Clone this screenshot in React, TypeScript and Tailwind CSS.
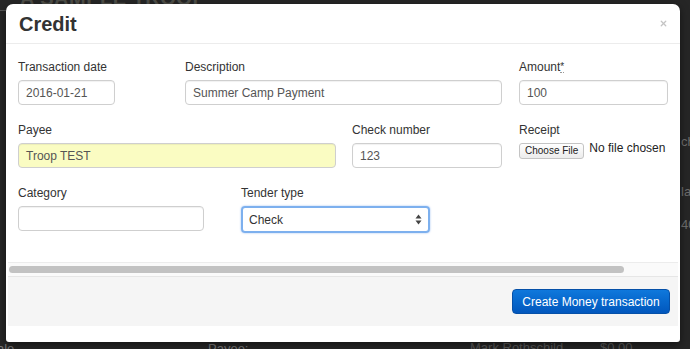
import { X } from 'lucide-react';

const font = "font-['Liberation_Sans',Arial,sans-serif]";

function Label({ children }: { children: React.ReactNode }) {
  return <div className="h-[14px] text-[12px] leading-[14px] text-[#333]">{children}</div>;
}

function TextInput({ value, width, bg = 'bg-white' }: { value: string; width: string; bg?: string }) {
  return (
    <div
      className={`mt-[6px] h-[25px] ${width} ${bg} rounded-[4px] border border-[#cfcfcf] shadow-[inset_0_1px_1px_rgba(0,0,0,0.06)] px-[7px] flex items-center text-[12px] text-[#555]`}
    >
      {value}
    </div>
  );
}

export default function App() {
  return (
    <div className={`relative w-[690px] h-[349px] overflow-hidden bg-[#262626] pt-[4px] pl-[6px] ${font}`}>
      {/* page behind the backdrop */}
      <div className="absolute left-[20px] top-[-17px] text-[20px] font-bold tracking-wide text-[#4e4e48]">A SAMPLE TROOP</div>
      <div className="absolute left-0 top-[10px] w-[6px] h-px bg-[#555]" />
      <div className="absolute left-[-3px] top-[339px] text-[13px] text-[#7a7a7a]">ale</div>
      <div className="absolute left-[208px] top-[339px] text-[13px] text-[#7a7a7a]">Payee:</div>
      <div className="absolute left-[470px] top-[338px] text-[13px] text-[#5a5a5a]">Mark Rothschild</div>
      <div className="absolute left-[600px] top-[338px] text-[13px] text-[#5a5a5a]">$0.00</div>
      <div className="absolute left-[681px] top-[182px] text-[13px] text-[#6e6e6e]">la</div>
      <div className="absolute left-[681px] top-[215px] text-[13px] text-[#6e6e6e]">40</div>
      <div className="absolute left-[681px] top-[132px] text-[13px] text-[#6e6e6e]">ch</div>

      {/* modal */}
      <div className="relative w-[674px] h-[338px] bg-white rounded-t-[7px] rounded-b-[3px] flex flex-col shadow-[0_3px_9px_rgba(0,0,0,0.5)]">
        <div className="h-[40px] shrink-0 border-b border-[#ececec] pl-[13px] pr-[12px] flex items-center justify-between">
          <span className="text-[20px] font-bold text-[#333] leading-none">Credit</span>
          <X className="w-[9px] h-[9px] text-[#c4c4c4]" strokeWidth={3.5} />
        </div>

        <div className="mx-[2px] flex flex-col flex-1">
          {/* form */}
          <div className="h-[218px] pt-[16px] px-[10px] flex flex-col">
            <div className="flex items-start">
              <div className="w-[167px]">
                <Label>Transaction date</Label>
                <TextInput value="2016-01-21" width="w-[97px]" />
              </div>
              <div className="w-[334px]">
                <Label>Description</Label>
                <TextInput value="Summer Camp Payment" width="w-[317px]" />
              </div>
              <div>
                <Label>
                  Amount<span className="text-[10px] align-top border-b border-dotted border-[#999]">*</span>
                </Label>
                <TextInput value="100" width="w-[149px]" />
              </div>
            </div>

            <div className="mt-[18px] flex items-start">
              <div className="w-[334px]">
                <Label>Payee</Label>
                <TextInput value="Troop TEST" width="w-[318px]" bg="bg-[#fafcc2]" />
              </div>
              <div className="w-[167px]">
                <Label>Check number</Label>
                <TextInput value="123" width="w-[150px]" />
              </div>
              <div>
                <Label>Receipt</Label>
                <div className="mt-[4px] flex items-start gap-[5px]">
                  <div className="mt-[2px] h-[16px] px-[5px] rounded-[3px] border border-[#c4c4c4] bg-gradient-to-b from-white to-[#ececec] text-[10px] leading-[14px] text-[#222]">
                    Choose File
                  </div>
                  <span className="text-[12px] leading-[14px] text-[#222]">No file chosen</span>
                </div>
              </div>
            </div>

            <div className="mt-[18px] flex items-start">
              <div className="w-[223px]">
                <Label>Category</Label>
                <TextInput value="" width="w-[186px]" />
              </div>
              <div>
                <Label>Tender type</Label>
                <div className="mt-[6px] h-[27px] w-[189px] rounded-[4px] border-[2px] border-[#7db0ee] shadow-[0_0_2px_rgba(80,140,230,0.6)] pl-[6px] pr-[6px] flex items-center justify-between text-[12px] text-[#333]">
                  <span>Check</span>
                  <svg width="7" height="11" viewBox="0 0 7 11">
                    <path d="M3.5 0.5 L6.5 4.5 H0.5 Z" fill="#444" />
                    <path d="M3.5 10.5 L6.5 6.5 H0.5 Z" fill="#444" />
                  </svg>
                </div>
              </div>
            </div>
          </div>

          {/* horizontal scrollbar */}
          <div className="h-[15px] shrink-0 border-t border-[#ececec] border-b border-b-[#e6e6e6] bg-[#fafafa] flex items-center pl-[1px]">
            <div className="h-[7px] w-[615px] rounded-full bg-[#c2c2c2]" />
          </div>

          {/* footer */}
          <div className="h-[49px] shrink-0 bg-[#f5f5f5] flex items-center justify-end pr-[8px]">
            <div className="h-[25px] w-[158px] rounded-[4px] border border-[#0550a8] bg-gradient-to-b from-[#0f78dc] to-[#0257bd] flex items-center justify-center text-[12px] text-white">
              Create Money transaction
            </div>
          </div>
        </div>
      </div>
    </div>
  );
}
